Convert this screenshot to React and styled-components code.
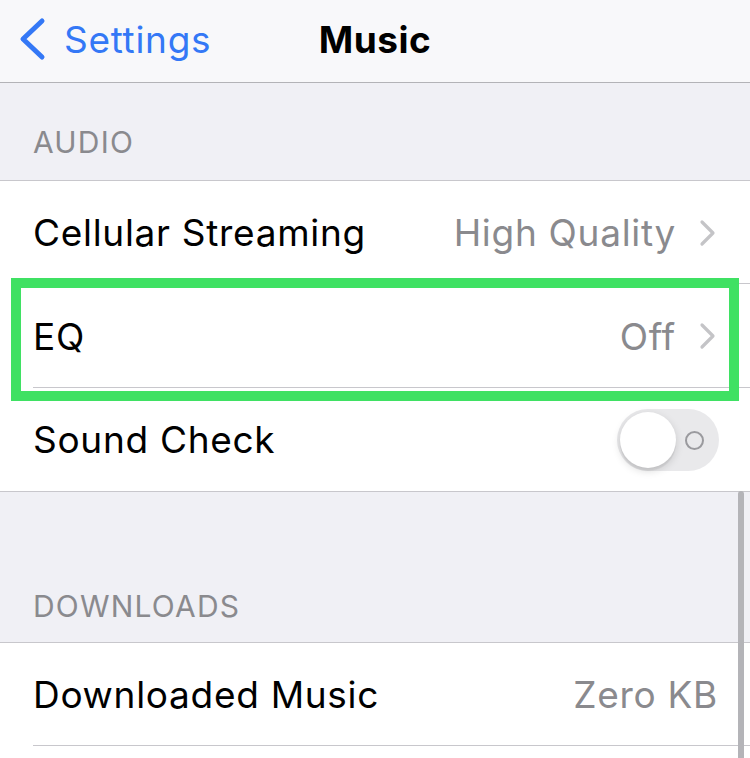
import React from 'react';
import styled, { createGlobalStyle } from 'styled-components';

const GlobalStyle = createGlobalStyle`
  html, body {
    margin: 0;
    padding: 0;
    height: 100%;
    overflow: hidden;
    background: #f0f0f5;
    font-family: Inter, 'Liberation Sans', sans-serif;
    -webkit-font-smoothing: antialiased;
  }
`;

const Screen = styled.div`
  position: relative;
  width: 750px;
  height: 758px;
  overflow: hidden;
  background: #f0f0f5;
`;

const NavBar = styled.div`
  height: 82px;
  display: grid;
  grid-template-columns: 1fr auto 1fr;
  align-items: center;
  background: #f8f8fa;
  border-bottom: 1px solid #b3b3b7;
`;

const BackLink = styled.div`
  display: flex;
  align-items: center;
  gap: 18px;
  padding-left: 18px;
  color: #3478f6;
  font-size: 37px;
  letter-spacing: 0.7px;
  padding-bottom: 4px;
`;

const NavTitle = styled.div`
  font-size: 37px;
  font-weight: 700;
  color: #000;
  letter-spacing: 0.5px;
  padding-bottom: 4px;
`;

const SectionHeader = styled.div`
  height: ${(p) => p.height}px;
  box-sizing: border-box;
  display: flex;
  align-items: flex-end;
  padding: 0 34px ${(p) => p.bottom}px 33px;
  font-size: 30px;
  color: #8a8a8e;
  letter-spacing: 1.2px;
`;

const Group = styled.div`
  background: #fff;
  border-top: 1px solid #c8c7cc;
  border-bottom: 1px solid #c8c7cc;
`;

const Row = styled.div`
  position: relative;
  height: ${(p) => p.height || 103}px;
  display: flex;
  align-items: center;
  padding: 0 32px 0 33px;
  font-size: 37px;
  color: #000;

  &:not(:last-child)::after {
    content: '';
    position: absolute;
    left: 33px;
    right: 0;
    bottom: 0;
    height: 1px;
    background: #c8c7cc;
  }
`;

const Label = styled.span`
  flex: 1;
  letter-spacing: 0.7px;
`;

const Value = styled.span`
  color: #8a8a8e;
  letter-spacing: 0.7px;
`;

const Chevron = styled.svg`
  margin-left: 22px;
  width: 20px;
  height: 28px;
  flex: none;
`;

const Highlight = styled.div`
  position: absolute;
  top: -6px;
  left: 11px;
  right: 11px;
  bottom: -13px;
  border: 10px solid #3fe163;
  pointer-events: none;
  z-index: 2;
`;

const Toggle = styled.div`
  position: relative;
  width: 102px;
  height: 62px;
  border-radius: 31px;
  background: #e9e9eb;
  margin-right: -1px;
`;

const Knob = styled.div`
  position: absolute;
  top: 3px;
  left: 3px;
  width: 56px;
  height: 56px;
  border-radius: 50%;
  background: #fff;
  box-shadow: 0 3px 8px rgba(0, 0, 0, 0.15), 0 3px 1px rgba(0, 0, 0, 0.06);
`;

const OffMark = styled.div`
  position: absolute;
  top: 22px;
  right: 15px;
  width: 15px;
  height: 15px;
  border-radius: 50%;
  border: 2px solid #9a9a9e;
`;

const ScrollIndicator = styled.div`
  position: absolute;
  right: 6px;
  top: 491px;
  width: 6px;
  height: 300px;
  border-radius: 3px;
  background: #b4b4b8;
  z-index: 3;
`;

const ChevronIcon = () => (
  <Chevron viewBox="0 0 20 28">
    <path d="M4 3 L15 14 L4 25" fill="none" stroke="#c4c4c7" strokeWidth="3.2" strokeLinecap="round" strokeLinejoin="round" />
  </Chevron>
);

const BackIcon = () => (
  <svg width="28" height="44" viewBox="0 0 28 44">
    <path d="M24 4 L5 22 L24 40" fill="none" stroke="#3478f6" strokeWidth="5" strokeLinecap="round" strokeLinejoin="round" />
  </svg>
);

export default function App() {
  return (
    <>
      <GlobalStyle />
      <Screen>
        <NavBar>
          <BackLink>
            <BackIcon />
            <span>Settings</span>
          </BackLink>
          <NavTitle>Music</NavTitle>
          <div />
        </NavBar>

        <SectionHeader height={97} bottom={20}>AUDIO</SectionHeader>
        <Group>
          <Row>
            <Label>Cellular Streaming</Label>
            <Value>High Quality</Value>
            <ChevronIcon />
          </Row>
          <Row height={104}>
            <Label>EQ</Label>
            <Value>Off</Value>
            <ChevronIcon />
            <Highlight />
          </Row>
          <Row>
            <Label>Sound Check</Label>
            <Toggle>
              <Knob />
              <OffMark />
            </Toggle>
          </Row>
        </Group>

        <SectionHeader height={150} bottom={18}>DOWNLOADS</SectionHeader>
        <Group>
          <Row>
            <Label>Downloaded Music</Label>
            <Value>Zero KB</Value>
          </Row>
          <Row />
        </Group>

        <ScrollIndicator />
      </Screen>
    </>
  );
}
